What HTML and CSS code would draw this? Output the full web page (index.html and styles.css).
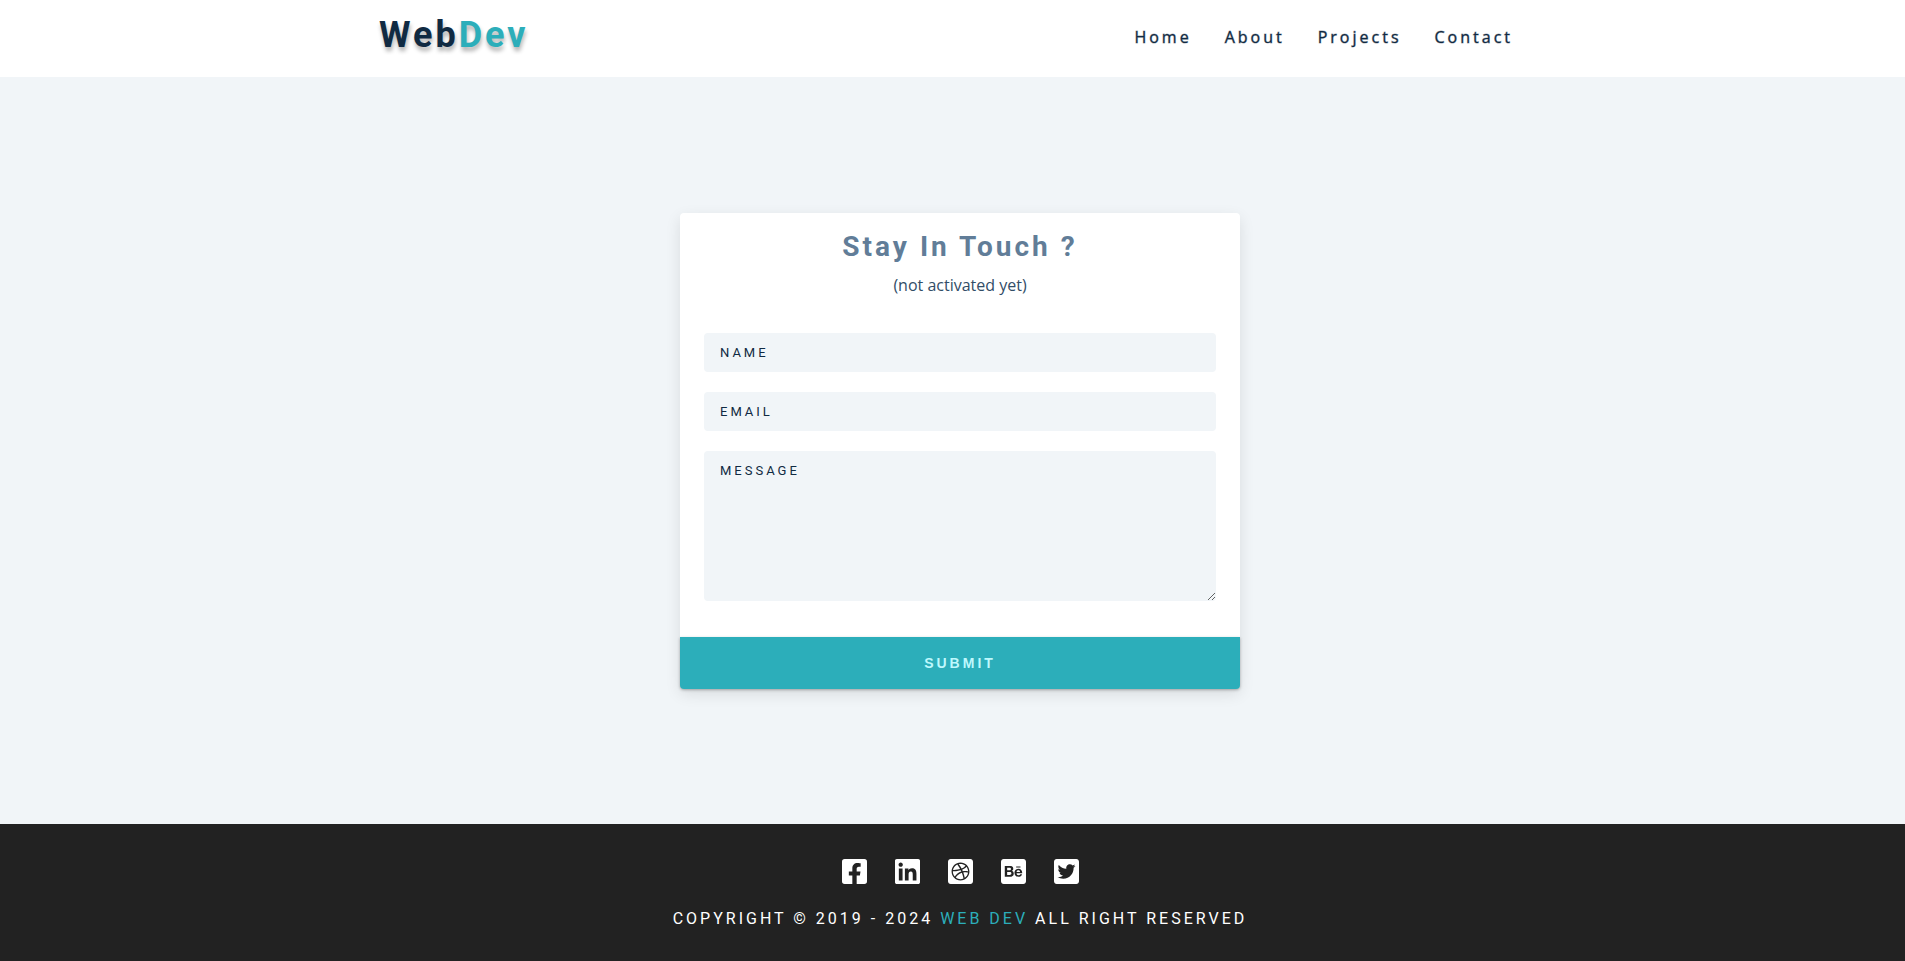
FILE: index.html
```html
<!DOCTYPE html>
<html lang="en">
<head>
<meta charset="utf-8">
<meta name="viewport" content="width=device-width, initial-scale=1">
<title>WebDev - Contact</title>
<link rel="stylesheet" href="styles.css">
</head>
<body>
<header class="header">
  <div class="container">
    <a class="logo" href="#">Web<span class="accent">Dev</span></a>
    <nav class="nav">
      <a href="#">Home</a>
      <a href="#">About</a>
      <a href="#">Projects</a>
      <a href="#">Contact</a>
    </nav>
  </div>
</header>
<main class="contact">
  <form class="card">
    <h1 class="card-title">Stay In Touch ?</h1>
    <p class="card-note">(not activated yet)</p>
    <div class="fields">
      <input class="control" type="text" placeholder="NAME" aria-label="Name">
      <input class="control" type="email" placeholder="EMAIL" aria-label="Email">
      <textarea class="control control-message" placeholder="MESSAGE" aria-label="Message"></textarea>
    </div>
    <button class="submit" type="submit">SUBMIT</button>
  </form>
</main>
<footer class="footer">
  <div class="social">
    <a href="#" aria-label="Facebook"><svg viewBox="0 0 448 512"><path d="M400 32H48A48 48 0 0 0 0 80v352a48 48 0 0 0 48 48h137.250V327.690h-63V256h63v-54.640c0-62.150 37-96.480 93.670-96.480 27.140 0 55.520 4.840 55.520 4.840v61h-31.270c-30.810 0-40.420 19.120-40.420 38.730V256h68.780l-11 71.690h-57.780V480H400a48 48 0 0 0 48-48V80a48 48 0 0 0-48-48z"/></svg></a>
    <a href="#" aria-label="LinkedIn"><svg viewBox="0 0 448 512"><path d="M416 32H31.900C14.300 32 0 46.500 0 64.300v383.400C0 465.500 14.300 480 31.900 480H416c17.600 0 32-14.500 32-32.300V64.300c0-17.800-14.400-32.300-32-32.300zM135.400 416H69V202.200h66.500V416zm-33.200-243c-21.300 0-38.500-17.300-38.500-38.500S80.900 96 102.200 96c21.200 0 38.500 17.300 38.500 38.500 0 21.300-17.200 38.500-38.500 38.500zm282.100 243h-66.400V312c0-24.800-.5-56.700-34.500-56.700-34.600 0-39.900 27-39.900 54.900V416h-66.400V202.200h63.700v29.200h.9c8.900-16.800 30.600-34.500 62.900-34.500 67.200 0 79.700 44.300 79.700 101.900V416z"/></svg></a>
    <a href="#" aria-label="Dribbble"><svg viewBox="0 0 448 512"><path d="M90.200 228.200c8.900-42.400 37.400-77.700 75.700-95.700 3.600 4.900 28 38.800 50.700 79-64 17-120.300 16.800-126.400 16.700zM314.600 154c-33.600-29.800-79.300-41.100-122.600-30.600 3.800 5.100 28.600 38.900 51 80 48.600-18.300 69.100-45.900 71.600-49.400zM140.100 364c40.500 31.600 93.300 36.700 137.300 18-2-12-10-53.800-29.200-103.600-55.100 18.800-93.800 56.400-108.100 85.600zm98.800-108.200c-3.400-7.800-7.200-15.500-11.100-23.200C159.600 253 93.400 252.200 87.400 252c0 1.400-.1 2.800-.1 4.200 0 35.100 13.300 67.100 35.100 91.400 22.200-37.900 67.100-77.900 116.500-91.800zm34.900 16.300c17.900 49.100 25.100 89.100 26.500 97.400 30.700-20.700 52.500-53.600 58.600-91.600-4.600-1.500-42.300-12.700-85.100-5.800zm-20.300-48.400c4.800 9.800 8.300 17.800 12 26.800 45.500-5.700 90.700 3.400 95.200 4.400-.3-32.300-11.800-61.900-30.900-85.100-2.900 3.900-25.800 33.200-76.300 53.900zM448 80v352c0 26.500-21.500 48-48 48H48c-26.500 0-48-21.500-48-48V80c0-26.500 21.500-48 48-48h352c26.500 0 48 21.500 48 48zm-64 176c0-88.200-71.800-160-160-160S64 167.800 64 256s71.800 160 160 160 160-71.800 160-160z"/></svg></a>
    <a href="#" aria-label="Behance"><svg viewBox="0 0 448 512"><path d="M186.500 293c0 19.300-14 25.400-31.200 25.400h-45.100v-52.900h46c18.600.1 30.300 7.800 30.300 27.500zm-7.700-82.300c0-17.700-13.700-21.900-28.900-21.900h-39.600v44.800H153c15.100 0 25.800-6.600 25.800-22.900zm132.300 23.200c-18.300 0-30.500 11.400-31.700 29.700h62.200c-1.700-18.500-11.300-29.700-30.500-29.700zM448 80v352c0 26.500-21.500 48-48 48H48c-26.500 0-48-21.500-48-48V80c0-26.500 21.500-48 48-48h352c26.500 0 48 21.500 48 48zM271.700 185h77.800v-18.900h-77.800V185zm-43 110.300c0-24.100-11.400-44.900-35-51.600 17.200-8.200 26.200-17.700 26.200-37 0-38.200-28.500-47.500-61.400-47.500H68v192h93.100c34.900-.2 67.600-16.900 67.600-55.900zM380 280.500c0-41.100-24.100-75.400-67.600-75.400-42.400 0-71.100 31.800-71.100 73.600 0 43.300 27.300 73 71.100 73 33.200 0 54.700-14.900 65.100-46.800h-33.700c-3.700 11.900-18.600 18.100-30.200 18.100-22.400 0-34.100-13.100-34.100-35.300h100.200c.1-2.300.3-4.800.3-7.200z"/></svg></a>
    <a href="#" aria-label="Twitter"><svg viewBox="0 0 448 512"><path d="M400 32H48C21.500 32 0 53.500 0 80v352c0 26.500 21.500 48 48 48h352c26.500 0 48-21.500 48-48V80c0-26.500-21.500-48-48-48zm-48.900 158.800c.2 2.800.2 5.700.2 8.500 0 86.700-66 186.600-186.600 186.600-37.200 0-71.700-10.800-100.700-29.400 5.300.6 10.400.8 15.800.8 30.700 0 58.900-10.400 81.400-28-28.800-.6-53-19.500-61.300-45.500 10.100 1.500 19.200 1.500 29.600-1.200-30-6.100-52.500-32.500-52.500-64.400v-.8c8.700 4.900 18.900 7.900 29.600 8.300a65.447 65.447 0 0 1-29.200-54.600c0-12.200 3.200-23.400 8.900-33.100 32.300 39.800 80.800 65.800 135.200 68.600-9.300-44.500 24-80.600 64-80.600 18.900 0 35.900 7.900 47.900 20.700 14.800-2.800 29-8.300 41.600-15.800-4.900 15.200-15.200 28-28.800 36.100 13.200-1.400 26-5.100 37.800-10.200-8.900 13.100-20.100 24.700-32.900 34z"/></svg></a>
  </div>
  <p class="copyright">COPYRIGHT © 2019 - 2024 <span class="accent">WEB DEV</span> ALL RIGHT RESERVED</p>
</footer>
</body>
</html>
```
FILE: styles.css
```css
* {
  box-sizing: border-box;
  margin: 0;
  padding: 0;
}

body {
  display: flex;
  flex-direction: column;
  min-height: 100vh;
  background: #f1f5f8;
  color: #102a42;
  font-family: "Open Sans", sans-serif;
  font-size: 16px;
  line-height: 24px;
}

a {
  color: inherit;
  text-decoration: none;
}

.accent {
  color: #2caeba;
}

/* the content is centred beside a 15px gutter */
.header,
.contact,
.footer {
  padding-left: 15px;
}

.header {
  background: #fff;
}

.container {
  display: flex;
  justify-content: space-between;
  align-items: flex-start;
  max-width: 1170px;
  margin: 0 auto;
  padding: 13px 32px 20px 4px;
}

.logo {
  font: bold 36px/44px Roboto, sans-serif;
  letter-spacing: 3px;
  text-shadow: 1px 4px 4px rgba(0, 0, 0, 0.3);
}

.nav {
  display: flex;
  gap: 33px;
  padding-top: 12px;
  letter-spacing: 3px;
  -webkit-text-stroke: 1px rgba(16, 42, 66, 0.4);
}

.contact {
  display: flex;
  flex: 1;
  align-items: center;
  justify-content: center;
}

.card {
  width: 560px;
  max-width: 100%;
  border-radius: 4px;
  background: #fff;
  box-shadow: 0 5px 15px rgba(0, 0, 0, 0.1);
  text-align: center;
}

.card-title {
  padding-top: 16px;
  color: #617d98;
  font: bold 28px/35px Roboto, sans-serif;
  letter-spacing: 3px;
}

.card-note {
  padding-top: 9px;
  color: #324d67;
}

.fields {
  display: flex;
  flex-direction: column;
  gap: 20px;
  padding: 36px 24px;
}

.control {
  width: 100%;
  height: 39px;
  padding: 8px 16px;
  border: 0;
  border-radius: 4px;
  background: #f1f5f8;
  color: #102a42;
  font: 13px/23px Roboto, sans-serif;
  letter-spacing: 3px;
}

.control::placeholder {
  color: #102a42;
}

.control-message {
  display: block;
  height: 150px;
  resize: both;
}

.submit {
  display: block;
  width: 100%;
  height: 52px;
  border: 0;
  border-radius: 0 0 4px 4px;
  background: #2caeba;
  box-shadow: 0 1px 3px rgba(0, 0, 0, 0.3);
  color: #bef8fd;
  font: bold 14px/20px "Liberation Sans", Arial, sans-serif;
  letter-spacing: 3px;
}

.footer {
  padding-top: 33px;
  padding-bottom: 30px;
  background: #222;
  color: #fff;
  text-align: center;
}

.social {
  display: flex;
  justify-content: center;
  gap: 28px;
}

.social svg {
  display: block;
  width: 25px;
  height: 29px;
  fill: #fff;
}

.copyright {
  padding-top: 21px;
  font-family: Roboto, sans-serif;
  letter-spacing: 3px;
}
```
